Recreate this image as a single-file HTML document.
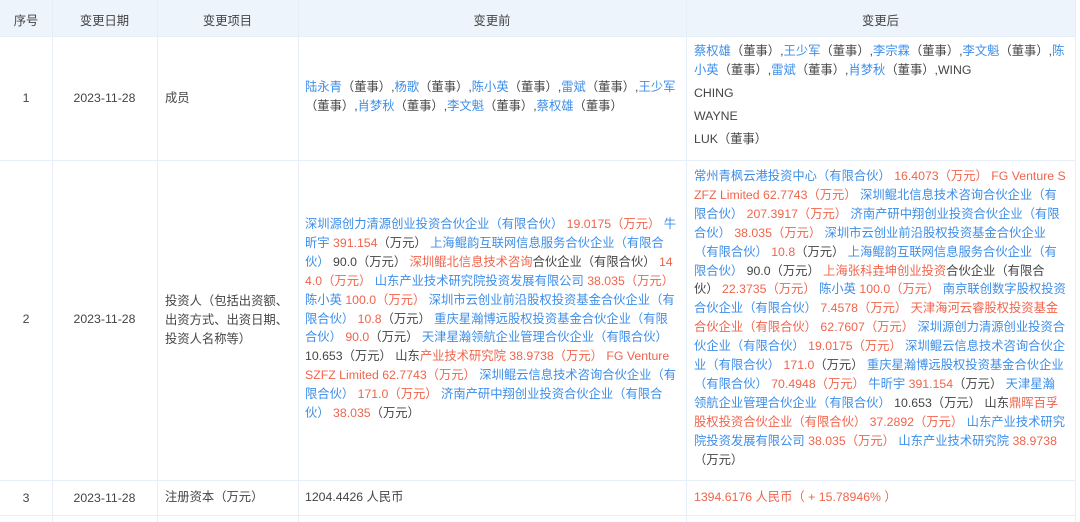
<!DOCTYPE html>
<html><head><meta charset="utf-8"><style>
*{margin:0;padding:0;box-sizing:border-box}
body{width:1080px;height:522px;background:#fff;font-family:"Liberation Sans","Noto Sans CJK SC",sans-serif;font-size:12.3px;color:#444;position:relative;overflow:hidden}
.h{position:absolute;top:0;left:0;width:1076px;height:36px;background:#edf4fc}
.c{position:absolute;text-align:center}
.v{position:absolute;top:0;width:1px;height:522px;background:#e6eef7}
.hr{position:absolute;left:0;width:1076px;height:1px;background:#e6eef7}
.t{position:absolute;white-space:nowrap;line-height:18.9px}
b{font-weight:normal;color:#3d8ee8}
i{font-style:normal;color:#f0644c}
</style></head><body>
<div class="h"></div>
<div class="v" style="left:52px"></div>
<div class="v" style="left:157px"></div>
<div class="v" style="left:298px"></div>
<div class="v" style="left:686px"></div>
<div class="v" style="left:1075px"></div>
<div class="hr" style="top:36px"></div>
<div class="hr" style="top:160px"></div>
<div class="hr" style="top:480px"></div>
<div class="hr" style="top:515px"></div>

<div class="c" style="left:0;width:52px;top:11px">序号</div>
<div class="c" style="left:52px;width:105px;top:11px">变更日期</div>
<div class="c" style="left:157px;width:141px;top:11px">变更项目</div>
<div class="c" style="left:298px;width:388px;top:11px">变更前</div>
<div class="c" style="left:686px;width:389px;top:11px">变更后</div>

<div class="c" style="left:0;width:52px;top:91px">1</div>
<div class="c" style="left:52px;width:105px;top:91px">2023-11-28</div>
<div class="t" style="left:165px;top:89px">成员</div>
<div class="t" style="left:305px;top:78px"><b>陆永青</b>（董事）,<b>杨歌</b>（董事）,<b>陈小英</b>（董事）,<b>雷斌</b>（董事）,<b>王少军</b><br>（董事）,<b>肖梦秋</b>（董事）,<b>李文魁</b>（董事）,<b>蔡权雄</b>（董事）</div>
<div class="t" style="left:694px;top:42px"><b>蔡权雄</b>（董事）,<b>王少军</b>（董事）,<b>李宗霖</b>（董事）,<b>李文魁</b>（董事）,<b>陈</b><br><b>小英</b>（董事）,<b>雷斌</b>（董事）,<b>肖梦秋</b>（董事）,WING</div>
<div class="t" style="left:694px;top:84px">CHING</div>
<div class="t" style="left:694px;top:107px">WAYNE</div>
<div class="t" style="left:694px;top:130px">LUK（董事）</div>

<div class="c" style="left:0;width:52px;top:312px">2</div>
<div class="c" style="left:52px;width:105px;top:312px">2023-11-28</div>
<div class="t" style="left:165px;top:292px">投资人（包括出资额、<br>出资方式、出资日期、<br>投资人名称等）</div>
<div class="t" style="left:305px;top:215px"><b>深圳源创力清源创业投资合伙企业（有限合伙）</b> <i>19.0175（万元）</i> <b>牛</b><br><b>昕宇</b> <i>391.154</i>（万元） <b>上海鲲韵互联网信息服务合伙企业（有限合</b><br><b>伙）</b> 90.0（万元） <i>深圳鲲北信息技术咨询</i>合伙企业（有限合伙） <i>14</i><br><i>4.0（万元）</i> <b>山东产业技术研究院投资发展有限公司</b> <i>38.035（万元）</i><br><b>陈小英</b> <i>100.0（万元）</i> <b>深圳市云创业前沿股权投资基金合伙企业（有</b><br><b>限合伙）</b> <i>10.8</i>（万元） <b>重庆星瀚博远股权投资基金合伙企业（有限</b><br><b>合伙）</b> <i>90.0</i>（万元） <b>天津星瀚领航企业管理合伙企业（有限合伙）</b><br>10.653（万元） 山东<i>产业技术研究院 38.9738（万元） FG Venture</i><br><i>SZFZ Limited 62.7743（万元）</i> <b>深圳鲲云信息技术咨询合伙企业（有</b><br><b>限合伙）</b> <i>171.0（万元）</i> <b>济南产研中翔创业投资合伙企业（有限合</b><br><b>伙）</b> <i>38.035</i>（万元）</div>
<div class="t" style="left:694px;top:167px"><b>常州青枫云港投资中心（有限合伙）</b> <i>16.4073（万元） FG Venture S</i><br><i>ZFZ Limited 62.7743（万元）</i> <b>深圳鲲北信息技术咨询合伙企业（有</b><br><b>限合伙）</b> <i>207.3917（万元）</i> <b>济南产研中翔创业投资合伙企业（有限</b><br><b>合伙）</b> <i>38.035（万元）</i> <b>深圳市云创业前沿股权投资基金合伙企业</b><br><b>（有限合伙）</b> <i>10.8</i>（万元） <b>上海鲲韵互联网信息服务合伙企业（有</b><br><b>限合伙）</b> 90.0（万元） <i>上海张科垚坤创业投资</i>合伙企业（有限合<br>伙） <i>22.3735（万元）</i> <b>陈小英</b> <i>100.0（万元）</i> <b>南京联创数字股权投资</b><br><b>合伙企业（有限合伙）</b> <i>7.4578（万元） 天津海河云睿股权投资基金</i><br><i>合伙企业（有限合伙） 62.7607（万元）</i> <b>深圳源创力清源创业投资合</b><br><b>伙企业（有限合伙）</b> <i>19.0175（万元）</i> <b>深圳鲲云信息技术咨询合伙企</b><br><b>业（有限合伙）</b> <i>171.0</i>（万元） <b>重庆星瀚博远股权投资基金合伙企业</b><br><b>（有限合伙）</b> <i>70.4948（万元）</i> <b>牛昕宇</b> <i>391.154</i>（万元） <b>天津星瀚</b><br><b>领航企业管理合伙企业（有限合伙）</b> 10.653（万元） 山东<i>鼎晖百孚</i><br><i>股权投资合伙企业（有限合伙） 37.2892（万元）</i> <b>山东产业技术研究</b><br><b>院投资发展有限公司</b> <i>38.035（万元）</i> <b>山东产业技术研究院</b> <i>38.9738</i><br>（万元）</div>

<div class="c" style="left:0;width:52px;top:491px">3</div>
<div class="c" style="left:52px;width:105px;top:491px">2023-11-28</div>
<div class="t" style="left:165px;top:488px">注册资本（万元）</div>
<div class="t" style="left:305px;top:488px">1204.4426 人民币</div>
<div class="t" style="left:694px;top:488px"><i>1394.6176 人民币（ + 15.78946% ）</i></div>
</body></html>
